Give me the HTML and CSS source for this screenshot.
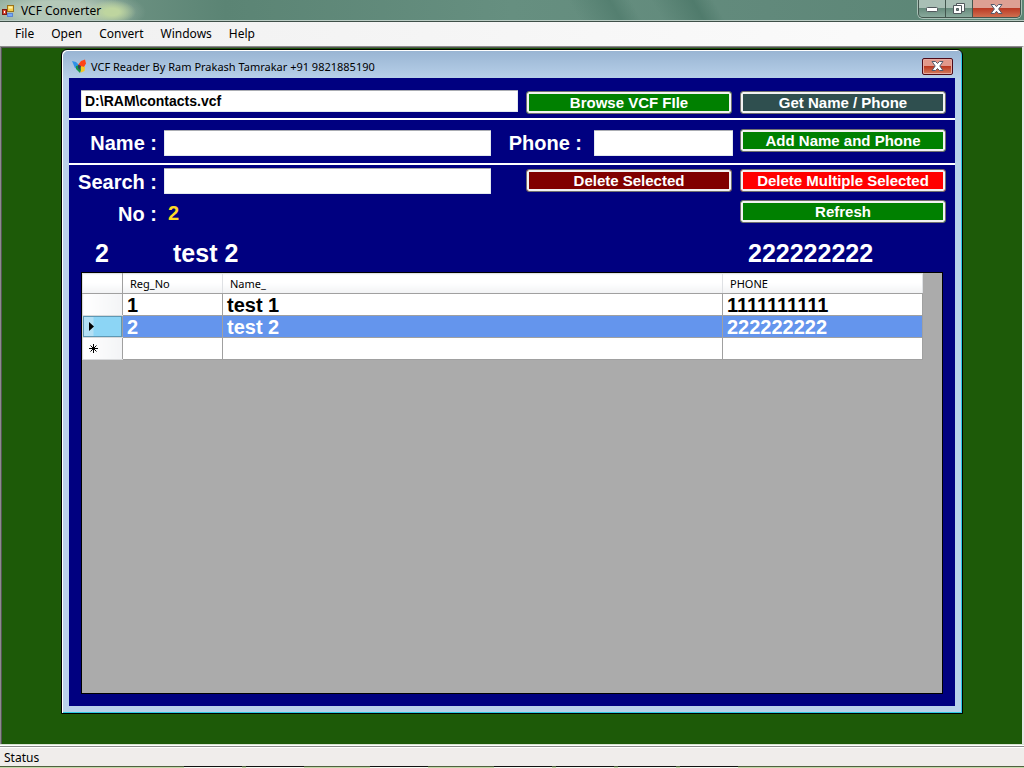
FILE: index.html
```
<!DOCTYPE html>
<html lang="en">
<head>
<meta charset="utf-8">
<title>VCF Converter</title>
<link rel="stylesheet" href="styles.css">
</head>
<body>
<div class="app">
  <header class="titlebar">
    <svg class="app-icon" width="14" height="14" viewBox="0 0 14 14" aria-hidden="true">
      <rect x="5.500" y=".5" width="6" height="6" fill="#f8cf4c" stroke="#9b7317"/>
      <path d="M6.500 1.500h4v2h-4z" fill="#fff0a5"/>
      <rect x=".5" y="4.500" width="4" height="5" fill="#d94a32" stroke="#7c1d13"/>
      <path d="M2 6h1v2H2z" fill="#fff"/>
      <rect x="5.500" y="8.500" width="5" height="3" fill="#77aaf5" stroke="#5b84d2"/>
    </svg>
    <h1 class="title">VCF Converter</h1>
    <div class="caption-buttons">
      <button type="button" class="caption" aria-label="Minimize">
        <svg width="14" height="8" viewBox="0 0 14 8"><rect x="1.500" y="2.500" width="11" height="4" rx="1" fill="#fff" stroke="#51595d"/></svg>
      </button>
      <button type="button" class="caption" aria-label="Restore">
        <svg width="14" height="14" viewBox="0 0 14 14"><path d="M4.500 1.500h8v8h-8z" fill="#fff" stroke="#51595d"/><path d="M1.500 3.500h8v8h-8z" fill="#fff" stroke="#51595d"/><path d="M4.500 6.500h2v2h-2z" fill="#709788" stroke="#51595d"/></svg>
      </button>
      <button type="button" class="caption caption-close" aria-label="Close">
        <svg width="13" height="12" viewBox="0 0 13 12"><path d="M1 1.500h3.500l2 2.200 2-2.200H12L8.600 6l3.400 4.500H8.500l-2-2.200-2 2.200H1L4.400 6z" fill="#fff" stroke="#535b6c"/></svg>
      </button>
    </div>
  </header>

  <nav class="menubar">
    <button type="button" class="menu">File</button>
    <button type="button" class="menu">Open</button>
    <button type="button" class="menu">Convert</button>
    <button type="button" class="menu">Windows</button>
    <button type="button" class="menu">Help</button>
  </nav>

  <main class="workspace">
    <section class="window">
      <header class="window-head">
        <svg class="window-icon" width="16" height="15" viewBox="0 0 16 15" aria-hidden="true">
          <path d="M1 2l4 1 3 3-1 4-3-1z" fill="#2f91e8"/>
          <path d="M7 6l3-4 4-1.500 1 4L13 8 9 9z" fill="#ff4215"/>
          <path d="M9 7l5 1-.5 4L10 13.500 8 10z" fill="#f7c820"/>
          <path d="M5 7l4-1 1 5-1 3-4-4z" fill="#159447"/>
          <path d="M7 6l3 1-1 4-2-2z" fill="#33405a"/>
        </svg>
        <h2 class="title window-title">VCF Reader By Ram Prakash Tamrakar +91 9821885190</h2>
        <button type="button" class="window-close" aria-label="Close window">
          <svg width="13" height="10" viewBox="0 0 13 10"><path d="M1 .5h3.500l2 2 2-2H12L8.800 5 12 9.500H8.500l-2-2-2 2H1L4.200 5z" fill="#fff" stroke="#535b6c"/></svg>
        </button>
      </header>

      <form class="client">
        <div class="row row-file">
          <input class="field file-path" type="text" value="D:\RAM\contacts.vcf" aria-label="VCF file">
          <button type="button" class="btn green">Browse VCF FIle</button>
          <button type="button" class="btn slate">Get Name / Phone</button>
        </div>
        <div class="row row-entry">
          <label class="label" for="name">Name :</label>
          <input class="field field-grow" id="name" type="text">
          <label class="label label-phone" for="phone">Phone :</label>
          <input class="field field-phone" id="phone" type="text">
          <button type="button" class="btn green">Add Name and Phone</button>
        </div>
        <div class="search">
          <label class="label" for="search">Search :</label>
          <input class="field" id="search" type="text">
          <button type="button" class="btn maroon">Delete Selected</button>
          <button type="button" class="btn red">Delete Multiple Selected</button>
          <span class="label">No :</span>
          <output class="count">2</output>
          <button type="button" class="btn green refresh">Refresh</button>
        </div>
        <div class="record">
          <span>2</span><span>test 2</span><span>222222222</span>
        </div>
        <div class="grid">
          <table class="contacts">
            <colgroup><col class="col-mark"><col class="col-no"><col class="col-name"><col class="col-phone"></colgroup>
            <thead>
              <tr><th></th><th scope="col">Reg_No</th><th scope="col">Name_</th><th scope="col">PHONE</th></tr>
            </thead>
            <tbody>
              <tr><td class="mark"></td><td>1</td><td>test 1</td><td>1111111111</td></tr>
              <tr class="selected"><td class="mark"><svg width="5" height="9" viewBox="0 0 5 9"><path d="M0 0l5 4.500L0 9z" fill="#000"/></svg></td><td>2</td><td>test 2</td><td>222222222</td></tr>
              <tr><td class="mark"><svg width="9" height="9" viewBox="0 0 9 9"><path d="M4.500 0v9M0 4.500h9M1.500 1.500l6 6M7.500 1.500l-6 6" stroke="#000"/></svg></td><td></td><td></td><td></td></tr>
            </tbody>
          </table>
        </div>
      </form>
    </section>
  </main>

  <footer class="status">Status</footer>
  <div class="taskbar"><i></i><i></i><i></i><i></i><i></i><i></i><i></i></div>
</div>
</body>
</html>
```
FILE: styles.css
```
* { box-sizing: border-box; }

body {
  margin: 0;
  font: 12px/16px "Noto Sans", "Open Sans", sans-serif;
  color: #000;
}

button, input { font: inherit; margin: 0; }

.app {
  display: flex;
  flex-direction: column;
  min-height: 100vh;
}

.title { margin: 0; font-size: 12px; font-weight: 400; line-height: 16px; }

.titlebar {
  display: flex;
  align-items: flex-start;
  height: 22px;
  padding: 0 3px 0 2px;
  border-bottom: 1px solid #3f5049;
  box-shadow: inset 0 -1px #b9cbc3;
  background:
    radial-gradient(ellipse 24px 12px at 112px 12px, #bed59f 30%, transparent),
    radial-gradient(ellipse 90px 26px at 56px 12px, #b4c8b8 40%, transparent),
    linear-gradient(60deg, transparent 56%, #547f70 60%, transparent 62%, transparent 64%, #507b6c 68%, transparent 70%),
    linear-gradient(90deg, #7e9f90, #5b8474 22%, #668f80 50%, #61897b 75%, #5a8574);
}
.titlebar .title { flex: 1; padding-top: 3px; }
.app-icon { margin: 5px 5px 0 0; }

.caption-buttons {
  display: flex;
  border: 1px solid #43564e;
  border-top: 0;
  border-radius: 0 0 5px 5px;
  overflow: hidden;
  box-shadow: 0 0 0 1px #a9c0b6;
}
.caption {
  display: flex;
  align-items: center;
  justify-content: center;
  width: 27px;
  height: 17px;
  padding: 0;
  border: 0;
  border-right: 1px solid #43564e;
  background: linear-gradient(#a9bfb5 45%, #688c7d 50%, #89a99c);
}
.caption-close {
  width: 47px;
  border-right: 0;
  background: linear-gradient(#dda093 45%, #bb3b25 50%, #cf6f50);
}

.menubar {
  display: flex;
  gap: 17px;
  height: 24px;
  padding: 0 15px;
  background: linear-gradient(90deg, #f0f0f0, #fcfcfc);
}
.menu { padding: 0; border: 0; background: none; }

.workspace {
  display: flex;
  flex: 1;
  padding: 2px 59px 30px 60px;
  border: 1px solid #8c8c8c;
  border-width: 1px 2px 0 1px;
  border-right-color: #e6e6e6;
  box-shadow: inset 1px 1px #555;
  background: #1d5a08;
}

.window {
  display: flex;
  flex: 1;
  flex-direction: column;
  padding: 0 7px 7px;
  border: 1px solid #000;
  border-radius: 6px 6px 0 0;
  box-shadow: inset 1px 1px #fff, inset -1px -1px #2ccbe3;
  background: linear-gradient(#98b4d2, #b9d1ea 30px, #b9d1ea);
}
.window-head {
  display: flex;
  align-items: center;
  height: 28px;
  padding: 4px 2px 0;
}
.window-title { flex: 1; padding-top: 1px; font-size: 11px; }
.window-icon { margin-right: 4px; }
.window-close {
  display: flex;
  align-items: center;
  justify-content: center;
  width: 31px;
  height: 17px;
  padding: 0;
  border: 1px solid #4e0a18;
  border-radius: 2px;
  box-shadow: inset 0 0 0 1px #e5aaa0;
  background: linear-gradient(#e2988a 45%, #bb3820 50%, #d37e5f);
}

.client {
  display: flex;
  flex: 1;
  flex-direction: column;
  font-family: "Liberation Sans", Arial, sans-serif;
  font-weight: 700;
  color: #fff;
  background: #000080;
}

.row {
  display: flex;
  padding: 0 9px 0 0;
  border-bottom: 2px solid #fff;
}
.row-file { gap: 8px; height: 42px; padding-top: 12px; padding-left: 12px; }
.row-entry { height: 45px; padding-top: 9px; }
.row-entry .field { margin-top: 1px; }

.label { font-size: 20px; line-height: 28px; text-align: right; }
.row-entry .label { width: 88px; margin-right: 7px; }
.row-entry .label-phone { width: 91px; margin-right: 12px; }

.field {
  min-width: 0;
  height: 26px;
  padding: 0 3px;
  border: 1px solid #e3e9ef;
  border-top-color: #abadb3;
  border-radius: 1px;
  font-size: 20px;
  color: #000;
  background: #fff;
}
.file-path { flex: 1; height: 22px; font-size: 14px; }
.field-grow { flex: 1; }
.row-entry .field-phone { width: 139px; margin-right: 7px; }

.btn {
  flex: none;
  width: 206px;
  height: 23px;
  padding: 0;
  border: 1px solid #707070;
  border-radius: 3px;
  box-shadow: inset 0 0 0 2px #f2f2f2;
  font-size: 15px;
  line-height: 17px;
  color: #fff;
}
.row-file .btn { margin-top: 1px; }
.green { background: #008000; }
.slate { background: #2f4f4f; }
.maroon { background: #800000; }
.red { background: #ff0000; }

.search {
  display: grid;
  grid-template-columns: 88px 1fr 214px 206px;
  grid-template-rows: 26px 26px;
  row-gap: 6px;
  padding: 3px 9px 0 0;
}
.search .field { margin: 0 35px 0 7px; }
.search .btn { margin-top: 1px; }
.search .refresh { grid-column: 4; margin-top: 0; }
.count { padding-left: 11px; font-size: 20px; line-height: 26px; color: #ffd927; }

.record {
  display: grid;
  grid-template-columns: 78px 1fr 198px;
  padding: 11px 9px 3px 26px;
  font-size: 25px;
  line-height: 32px;
}

.grid {
  flex: 1;
  margin: 0 12px 12px;
  border: 1px solid #000;
  background: #ababab;
}
.contacts {
  width: calc(100% - 19px);
  border-collapse: collapse;
  table-layout: fixed;
  color: #000;
  background: #fff;
}
.col-mark { width: 40px; }
.col-no { width: 100px; }
.col-phone { width: 200px; }
.contacts th, .contacts td {
  padding: 0 4px;
  border: 1px solid #a0a0a0;
  text-align: left;
  white-space: nowrap;
}
.contacts th {
  height: 20px;
  padding: 0 7px;
  border-color: #dfe1e4;
  border-bottom-color: #a0a0a0;
  font-size: 11px;
  font-weight: 400;
  font-family: "Noto Sans", "Open Sans", sans-serif;
  line-height: 16px;
  background: linear-gradient(#fff 45%, #f1f2f4);
}
.contacts th:first-child { border-right-color: #a0a0a0; }
.contacts td { height: 22px; font-size: 20px; line-height: 20px; }
.contacts .mark {
  padding-left: 6px;
  border-color: #d8d9db;
  border-right-color: #a0a0a0;
  background: linear-gradient(90deg, #fff, #f3f4f6);
}
.mark svg { display: block; }
.selected td { color: #fff; background: #6495ed; }
.selected .mark {
  box-shadow: inset 0 0 0 1px #5d98b4;
  background: linear-gradient(90deg, #b2dff4 25%, #8cd5f5 25%);
}

.status {
  height: 22px;
  padding: 5px 4px 0;
  border-top: 1px solid #d9e4d4;
  box-shadow: inset 0 1px #fff, inset 0 2px #8c8c8c, inset 0 3px #fff;
  background: #f0edeb;
}

.taskbar {
  display: flex;
  gap: 4px;
  height: 2px;
  padding-left: 184px;
  border-top: 1px solid #50603f;
  background: #c3d8a9;
}
.taskbar i { width: 58px; height: 1px; background: #f4f8ee; box-shadow: 0 -1px #111; }
.taskbar i:nth-child(3), .taskbar i:nth-child(4) { margin-left: 62px; }
```
